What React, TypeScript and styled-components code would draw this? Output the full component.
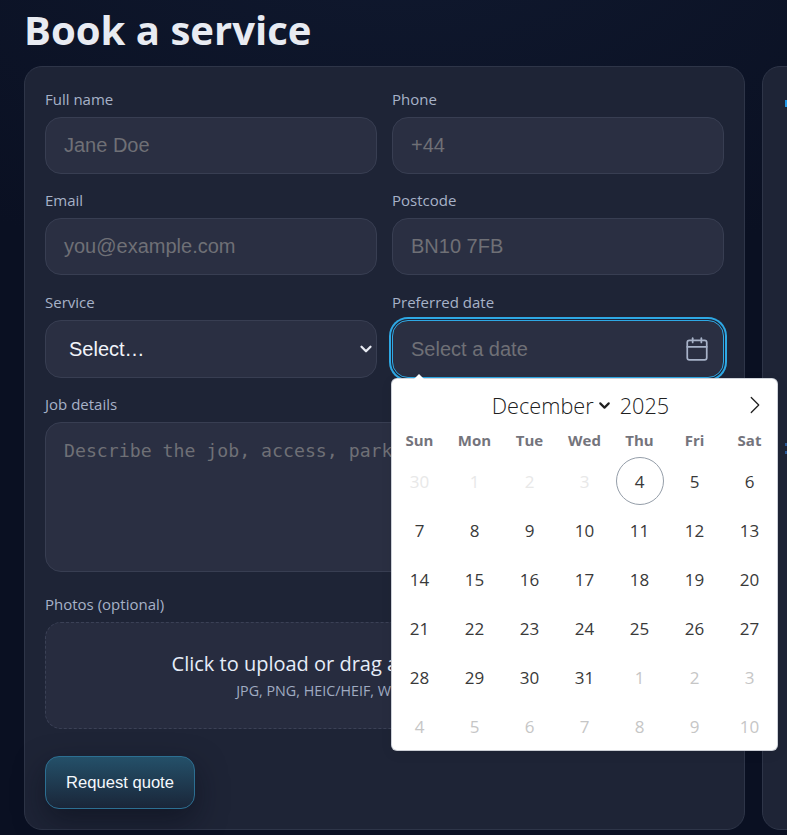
import React from "react";
import styled, { createGlobalStyle } from "styled-components";
import { Calendar, ChevronDown, ChevronRight } from "lucide-react";

const GlobalStyle = createGlobalStyle`
    html, body {
        margin: 0;
        height: 835px;
        overflow: hidden;
        background: #0b1224;
    }
    body {
        font-family: "Open Sans", "Noto Sans", sans-serif;
    }
`;

const Page = styled.div`
    width: 787px;
    height: 835px;
    overflow: hidden;
    box-sizing: border-box;
    padding: 0 0 0 24px;
    background: radial-gradient(900px 500px at 50% -10%, #10192f, #0a1022 75%);
`;

const Title = styled.h1`
    margin: 0;
    height: 66px;
    font-size: 40.1px;
    line-height: 60px;
    font-weight: 700;
    color: #e8ebf2;
`;

const Columns = styled.div`
    display: grid;
    grid-template-columns: 721px 300px;
    gap: 17px;
`;

const Card = styled.section`
    position: relative;
    height: 764px;
    box-sizing: border-box;
    padding: 20px;
    background: #1e2436;
    border: 1px solid #2e3548;
    border-radius: 18px;
`;

const FormCard = styled(Card)`
    z-index: 2;
`;

const SideCard = styled(Card)`
    padding: 0;
`;

const SideMark = styled.div<{ $top: number; $height: number; $color: string }>`
    position: absolute;
    left: 22px;
    top: ${(p) => p.$top}px;
    width: 3px;
    height: ${(p) => p.$height}px;
    background: ${(p) => p.$color};
`;

const Form = styled.div`
    display: grid;
    grid-template-columns: 332px 332px;
    column-gap: 15px;
`;

const Field = styled.div<{ $wide?: boolean; $gap: number }>`
    grid-column: ${(p) => (p.$wide ? "1 / -1" : "auto")};
    margin-bottom: ${(p) => p.$gap}px;
`;

const Label = styled.label`
    display: block;
    height: 22px;
    margin-bottom: 8px;
    font-size: 15px;
    line-height: 24px;
    color: #a7b2c8;
`;

const Input = styled.div<{ $focus?: boolean; $tall?: boolean }>`
    display: flex;
    align-items: center;
    height: ${(p) => (p.$tall ? 58 : 57)}px;
    box-sizing: border-box;
    padding: 0 18px;
    font-family: "Liberation Sans", Arial, sans-serif;
    font-size: 20px;
    color: #6f7076;
    background: #2a2f42;
    border: 1px solid ${(p) => (p.$focus ? "#2ea8e4" : "#383e52")};
    border-radius: 16px;
    box-shadow: ${(p) => (p.$focus ? "0 0 0 1px #1e2436, 0 0 0 3px #2ea8e4" : "none")};
`;

const DateInput = styled(Input)`
    padding-right: 13px;
`;

const DateText = styled.span`
    flex: 1;
`;

const SelectBox = styled(Input)`
    justify-content: space-between;
    padding: 0 1px 0 23px;
    color: #f1f4fa;
`;

const TextArea = styled(Input)`
    align-items: flex-start;
    height: 150px;
    padding-top: 17px;
    font-family: "DejaVu Sans Mono", "Liberation Mono", monospace;
    font-size: 18.2px;
    line-height: 22px;
`;

const Dropzone = styled.div`
    height: 107px;
    box-sizing: border-box;
    padding-top: 27px;
    text-align: center;
    background: #272c3f;
    border: 1px dashed #3b4156;
    border-radius: 16px;
`;

const DropTitle = styled.div`
    font-size: 20px;
    line-height: 27px;
    color: #e6edf8;
`;

const DropHint = styled.div`
    margin-top: 4px;
    font-size: 14.3px;
    line-height: 20px;
    color: #a0abc2;
`;

const SubmitButton = styled.button`
    display: block;
    width: 150px;
    height: 53px;
    font-family: "Liberation Sans", Arial, sans-serif;
    font-size: 16.6px;
    color: #f4f8fc;
    background: linear-gradient(180deg, #245069, #1a2639);
    border: 1px solid #2c6f92;
    border-radius: 14px;
    box-shadow: 0 12px 30px rgba(8, 12, 24, 0.5);
`;

const Popup = styled.div`
    position: absolute;
    left: 367px;
    top: 312px;
    width: 385px;
    height: 371px;
    box-sizing: border-box;
    color: #393939;
    background: #fff;
    border-radius: 5px;
    box-shadow: 0 3px 13px rgba(0, 0, 0, 0.08), 0 0 0 1px #d5d9e0;

    &::before {
        content: "";
        position: absolute;
        left: 22px;
        top: -5px;
        border-left: 5px solid transparent;
        border-right: 5px solid transparent;
        border-bottom: 5px solid #fff;
    }
`;

const MonthBar = styled.div`
    position: relative;
    display: flex;
    align-items: center;
    justify-content: center;
    height: 47px;
    box-sizing: border-box;
    padding: 5px 8px 0 0;
    font-size: 21.7px;
    font-weight: 300;
    color: #202020;
`;

const MonthName = styled.span`
    display: inline-flex;
    align-items: center;
    gap: 2px;
`;

const YearName = styled.span`
    margin-left: 7px;
`;

const NextArrow = styled.span`
    position: absolute;
    right: 7px;
    top: 11px;
    display: flex;
    color: #202020;
`;

const DayGrid = styled.div`
    display: grid;
    grid-template-columns: repeat(7, 55px);
`;

const Weekday = styled.div`
    height: 29px;
    margin-bottom: 2px;
    font-size: 15px;
    line-height: 29px;
    font-weight: 700;
    text-align: center;
    color: #74747c;
`;

const Day = styled.div<{ $muted?: boolean; $faint?: boolean; $today?: boolean }>`
    justify-self: center;
    width: 48px;
    height: 48px;
    margin: 0 0 1px;
    box-sizing: border-box;
    font-size: 17px;
    line-height: 47px;
    text-align: center;
    color: ${(p) => (p.$faint ? "#e8e8e8" : p.$muted ? "#c6c6c6" : "#393939")};
    border: 1px solid ${(p) => (p.$today ? "#959ea9" : "transparent")};
    border-radius: 50%;
`;

const WEEKDAYS = ["Sun", "Mon", "Tue", "Wed", "Thu", "Fri", "Sat"];

type DayCell = { n: number; faint?: boolean; muted?: boolean; today?: boolean };

const buildDays = (): DayCell[] => {
    const days: DayCell[] = [{ n: 30, faint: true }, { n: 1, faint: true }, { n: 2, faint: true }, { n: 3, faint: true }];
    for (let n = 4; n <= 31; n++) days.push({ n, today: n === 4 });
    for (let n = 1; n <= 10; n++) days.push({ n, muted: true });
    return days;
};

export default function App() {
    return (
        <Page>
            <GlobalStyle />
            <Title>Book a service</Title>
            <Columns>
                <FormCard>
                    <Form>
                        <Field $gap={14}>
                            <Label>Full name</Label>
                            <Input>Jane Doe</Input>
                        </Field>
                        <Field $gap={14}>
                            <Label>Phone</Label>
                            <Input>+44</Input>
                        </Field>
                        <Field $gap={15}>
                            <Label>Email</Label>
                            <Input>you@example.com</Input>
                        </Field>
                        <Field $gap={15}>
                            <Label>Postcode</Label>
                            <Input>BN10 7FB</Input>
                        </Field>
                        <Field $gap={14}>
                            <Label>Service</Label>
                            <SelectBox $tall>
                                Select…
                                <ChevronDown size={18} strokeWidth={3} color="#e8ebf2" />
                            </SelectBox>
                        </Field>
                        <Field $gap={14}>
                            <Label>Preferred date</Label>
                            <DateInput $focus $tall>
                                <DateText>Select a date</DateText>
                                <Calendar size={26} strokeWidth={1.6} color="#a7b2c8" />
                            </DateInput>
                        </Field>
                        <Field $wide $gap={20}>
                            <Label>Job details</Label>
                            <TextArea>Describe the job, access, parking…</TextArea>
                        </Field>
                        <Field $wide $gap={27}>
                            <Label>Photos (optional)</Label>
                            <Dropzone>
                                <DropTitle>Click to upload or drag and drop up to 10 files</DropTitle>
                                <DropHint>JPG, PNG, HEIC/HEIF, WEBP up to 10MB each</DropHint>
                            </Dropzone>
                        </Field>
                    </Form>
                    <SubmitButton>Request quote</SubmitButton>
                    <Popup>
                        <MonthBar>
                            <MonthName>
                                December
                                <ChevronDown size={17} strokeWidth={3} />
                            </MonthName>
                            <YearName>2025</YearName>
                            <NextArrow>
                                <ChevronRight size={30} strokeWidth={1} />
                            </NextArrow>
                        </MonthBar>
                        <DayGrid>
                            {WEEKDAYS.map((d) => (
                                <Weekday key={d}>{d}</Weekday>
                            ))}
                            {buildDays().map((d, i) => (
                                <Day key={i} $faint={d.faint} $muted={d.muted} $today={d.today}>
                                    {d.n}
                                </Day>
                            ))}
                        </DayGrid>
                    </Popup>
                </FormCard>
                <SideCard>
                    <SideMark $top={33} $height={7} $color="#1f96e6" />
                    <SideMark $top={376} $height={3} $color="#2a5a9a" />
                    <SideMark $top={384} $height={3} $color="#2a5a9a" />
                </SideCard>
            </Columns>
        </Page>
    );
}
